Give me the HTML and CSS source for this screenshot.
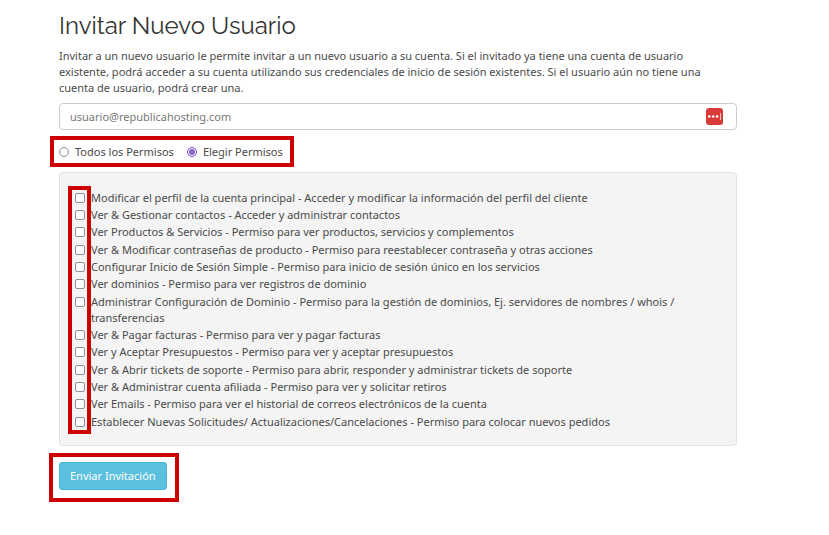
FILE: index.html
```html
<!DOCTYPE html>
<html lang="es">
<head>
    <meta charset="UTF-8">
    <meta name="viewport" content="width=device-width, initial-scale=1.0">
    <title>Invitar Nuevo Usuario</title>
    <link rel="stylesheet" href="styles.css">
</head>
<body>
    <main class="container">
        <h1>Invitar Nuevo Usuario</h1>
        <p class="intro">Invitar a un nuevo usuario le permite invitar a un nuevo usuario a su cuenta. Si el invitado ya tiene una cuenta de usuario existente, podrá acceder a su cuenta utilizando sus credenciales de inicio de sesión existentes. Si el usuario aún no tiene una cuenta de usuario, podrá crear una.</p>

        <form>
            <div class="email-field">
                <input type="email" class="email-input" placeholder="usuario@republicahosting.com" aria-label="Correo electrónico">
                <svg class="email-icon" width="17" height="17" viewBox="0 0 17 17" aria-hidden="true">
                    <rect width="17" height="17" rx="3" fill="#d93a3a"/>
                    <circle cx="3.3" cy="8.5" r="1.3" fill="#fff"/>
                    <circle cx="7.2" cy="8.5" r="1.3" fill="#fff"/>
                    <circle cx="11.1" cy="8.5" r="1.3" fill="#fff"/>
                    <rect x="14" y="5" width="1" height="7" fill="#f6c9c9"/>
                </svg>
            </div>

            <div class="scope highlight">
                <label><input type="radio" name="permissions" value="all">Todos los Permisos</label>
                <label><input type="radio" name="permissions" value="choose" checked>Elegir Permisos</label>
            </div>

            <!-- Permissions -->
            <div class="well">
                <ul class="permissions highlight">
                    <li><label><input type="checkbox" name="perms"><span>Modificar el perfil de la cuenta principal - Acceder y modificar la información del perfil del cliente</span></label></li>
                    <li><label><input type="checkbox" name="perms"><span>Ver &amp; Gestionar contactos - Acceder y administrar contactos</span></label></li>
                    <li><label><input type="checkbox" name="perms"><span>Ver Productos &amp; Servicios - Permiso para ver productos, servicios y complementos</span></label></li>
                    <li><label><input type="checkbox" name="perms"><span>Ver &amp; Modificar contraseñas de producto - Permiso para reestablecer contraseña y otras acciones</span></label></li>
                    <li><label><input type="checkbox" name="perms"><span>Configurar Inicio de Sesión Simple - Permiso para inicio de sesión único en los servicios</span></label></li>
                    <li><label><input type="checkbox" name="perms"><span>Ver dominios - Permiso para ver registros de dominio</span></label></li>
                    <li><label><input type="checkbox" name="perms"><span>Administrar Configuración de Dominio - Permiso para la gestión de dominios, Ej. servidores de nombres / whois / transferencias</span></label></li>
                    <li><label><input type="checkbox" name="perms"><span>Ver &amp; Pagar facturas - Permiso para ver y pagar facturas</span></label></li>
                    <li><label><input type="checkbox" name="perms"><span>Ver y Aceptar Presupuestos - Permiso para ver y aceptar presupuestos</span></label></li>
                    <li><label><input type="checkbox" name="perms"><span>Ver &amp; Abrir tickets de soporte - Permiso para abrir, responder y administrar tickets de soporte</span></label></li>
                    <li><label><input type="checkbox" name="perms"><span>Ver &amp; Administrar cuenta afiliada - Permiso para ver y solicitar retiros</span></label></li>
                    <li><label><input type="checkbox" name="perms"><span>Ver Emails - Permiso para ver el historial de correos electrónicos de la cuenta</span></label></li>
                    <li><label><input type="checkbox" name="perms"><span>Establecer Nuevas Solicitudes/ Actualizaciones/Cancelaciones - Permiso para colocar nuevos pedidos</span></label></li>
                </ul>
            </div>

            <div class="actions highlight">
                <button type="submit" class="button">Enviar Invitación</button>
            </div>
        </form>
    </main>
</body>
</html>
```
FILE: styles.css
```css
*,
*::before {
    box-sizing: border-box;
}

body {
    margin: 0;
    background-color: #fff;
    font-family: "Noto Sans", "Open Sans", sans-serif;
    font-size: 11px;
    line-height: 16px;
    color: #4a4a4a;
}

.container {
    padding: 10px 92px 32px 59px;
}

h1 {
    margin: 0 0 6px;
    font-family: Raleway, Lato, sans-serif;
    font-size: 24px;
    font-weight: 400;
    line-height: 32px;
    color: #333;
}

.intro {
    margin: 0 0 7px;
    padding-right: 20px;
}

.email-field {
    position: relative;
}

.email-input {
    display: block;
    width: 100%;
    height: 27px;
    padding: 0 36px 0 10px;
    border: 1px solid #ccc;
    border-radius: 4px;
    font: inherit;
    color: #555;
}

.email-input::placeholder {
    color: #777;
}

.email-icon {
    position: absolute;
    top: 5px;
    right: 14px;
}

/* Red frames over the parts to fill in */
.highlight {
    position: relative;
}

.highlight::before {
    content: "";
    position: absolute;
    border: 4px solid #c00;
    pointer-events: none;
}

.scope {
    display: flex;
    gap: 13px;
    width: fit-content;
    margin: 14px 0 12px;
}

.scope::before {
    inset: -8px -11px -7px -9px;
}

.scope label {
    display: flex;
    align-items: center;
    gap: 6px;
}

.scope input,
.permissions input {
    flex: none;
    margin: 0;
    appearance: none;
    border: 1px solid #8f8f9d;
    background-color: #fff;
}

.scope input {
    width: 10px;
    height: 10px;
    border-radius: 50%;
}

.scope input:checked {
    border-color: #8464c6;
    background-color: #8464c6;
    box-shadow: inset 0 0 0 1px #fff;
}

.well {
    padding: 17px 15px 14px;
    border: 1px solid #e3e3e3;
    border-radius: 4px;
    background-color: #f4f4f4;
}

.permissions {
    margin: 0;
    padding: 0;
    list-style: none;
}

.permissions::before {
    top: -4px;
    bottom: -3px;
    left: -7px;
    width: 23px;
}

.permissions li {
    padding-bottom: 1px;
}

.permissions li:nth-child(3n) {
    padding-bottom: 2px;
}

.permissions label {
    display: flex;
    gap: 6px;
}

.permissions input {
    width: 10px;
    height: 10px;
    margin-top: 3px;
    border-radius: 2px;
}

.permissions input:checked {
    background-color: #8464c6;
}

.actions {
    width: fit-content;
    margin-top: 16px;
}

.actions::before {
    inset: -9px -12px -12px -10px;
}

.button {
    display: block;
    height: 28px;
    padding: 0 10px;
    border: 1px solid #46b8da;
    border-radius: 3px;
    background-color: #5bc0de;
    font: inherit;
    color: #fff;
    cursor: pointer;
}

.button:hover {
    background-color: #31b0d5;
}
```
